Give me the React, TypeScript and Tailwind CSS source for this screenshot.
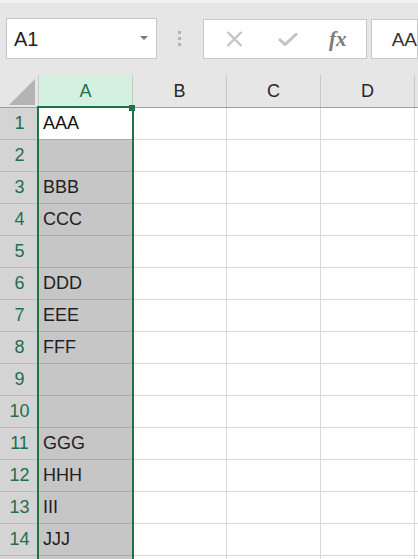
import React from 'react';

const cells = ['AAA', '', 'BBB', 'CCC', '', 'DDD', 'EEE', 'FFF', '', '', 'GGG', 'HHH', 'III', 'JJJ', ''];
const cols = ['A', 'B', 'C', 'D'];

const Toolbar: React.FC = () => (
  <div className="h-[75px] bg-[#e6e6e6] border-t-[3px] border-[#f1f1f1]">
    <div className="flex items-start pt-[15px] pl-[6px]">
      <div className="w-[151px] h-[41px] bg-white border border-[#c6c6c6] flex items-center justify-between pl-[7px] pr-[8px]">
        <span className="text-[20px] text-[#1f1f1f] leading-none">A1</span>
        <svg width="8" height="5" viewBox="0 0 8 5">
          <path d="M0 0 H8 L4 4 Z" fill="#7a7a7a" />
        </svg>
      </div>
      <div className="w-[46px] h-[41px] flex flex-col items-center justify-center gap-[3px]">
        <div className="w-[3px] h-[3px] bg-[#b4b4b4]" />
        <div className="w-[3px] h-[3px] bg-[#b4b4b4]" />
        <div className="w-[3px] h-[3px] bg-[#b4b4b4]" />
      </div>
      <div className="w-[164px] h-[40px] mt-[1px] bg-white border border-[#c6c6c6] flex items-center">
        <div className="w-[55px] flex justify-center pl-[6px]">
          <svg width="17" height="16" viewBox="0 0 17 16">
            <path d="M1.5 1 L15.5 15 M15.5 1 L1.5 15" stroke="#c3c3c3" strokeWidth="2.2" fill="none" />
          </svg>
        </div>
        <div className="w-[55px] flex justify-center pl-[4px]">
          <svg width="20" height="14" viewBox="0 0 20 14">
            <path d="M1 7 L7 12.5 L19 1.5" stroke="#c3c3c3" strokeWidth="3" fill="none" />
          </svg>
        </div>
        <div className="w-[52px] flex justify-center pr-[4px]">
          <span className="font-['Liberation_Serif',serif] italic font-bold text-[21px] text-[#7a7a7a] leading-none">fx</span>
        </div>
      </div>
      <div className="flex-1 h-[40px] mt-[1px] ml-[4px] bg-white border border-[#c6c6c6] flex items-center pl-[20px]">
        <span className="text-[19px] text-[#333] leading-none">AA</span>
      </div>
    </div>
  </div>
);

const HeaderRow: React.FC = () => (
  <div className="flex h-[33px] bg-[#e6e6e6] border-b border-[#9d9d9d]">
    <div className="w-[39px] shrink-0 flex items-end justify-end pr-[3px] pb-[2px] border-r border-[#c8c8c8]">
      <svg width="26" height="26" viewBox="0 0 26 26">
        <path d="M26 0 V26 H0 Z" fill="#b4b4b4" />
      </svg>
    </div>
    {cols.map(c => (
      <div
        key={c}
        className={
          c === 'A'
            ? 'w-[94px] shrink-0 flex items-center justify-center bg-[#d3f0e0] text-[#217346] border-r border-[#c8c8c8] text-[18px]'
            : 'w-[94px] shrink-0 flex items-center justify-center text-[#262626] border-r border-[#c8c8c8] text-[18px]'
        }>
        {c}
      </div>
    ))}
    <div className="flex-1" />
  </div>
);

const App: React.FC = () => {
  return (
    <div className="w-[418px] h-[559px] overflow-hidden bg-white relative font-['Liberation_Sans','Noto_Sans_CJK_JP',sans-serif]">
      <Toolbar />
      <HeaderRow />
      <div className="flex flex-col">
        {cells.map((txt, i) => (
          <div key={i} className="flex h-[32px] shrink-0">
            <div className="w-[39px] shrink-0 flex items-center justify-center bg-[#d4d4d4] border-b border-[#bababa] text-[18px] text-[#1f6e50]">
              {i < 14 ? i + 1 : ''}
            </div>
            <div
              className={
                i === 0
                  ? 'w-[94px] shrink-0 flex items-center pl-[4px] bg-white border-b border-[#acacac] text-[18px] text-[#111]'
                  : 'w-[94px] shrink-0 flex items-center pl-[4px] bg-[#c6c6c6] border-b border-[#acacac] text-[18px] text-[#1f1f1f]'
              }>
              {txt}
            </div>
            {['B', 'C', 'D'].map(c => (
              <div key={c} className="w-[94px] shrink-0 border-r border-b border-[#d9d9d9]" />
            ))}
            <div className="flex-1 border-b border-[#d9d9d9]" />
          </div>
        ))}
      </div>
      <div className="absolute left-[37px] top-[106px] w-[97px] h-[470px] border-2 border-[#217346]" />
      <div className="absolute left-[129px] top-[105px] w-[6px] h-[6px] bg-[#217346]" />
    </div>
  );
};

export default App;
